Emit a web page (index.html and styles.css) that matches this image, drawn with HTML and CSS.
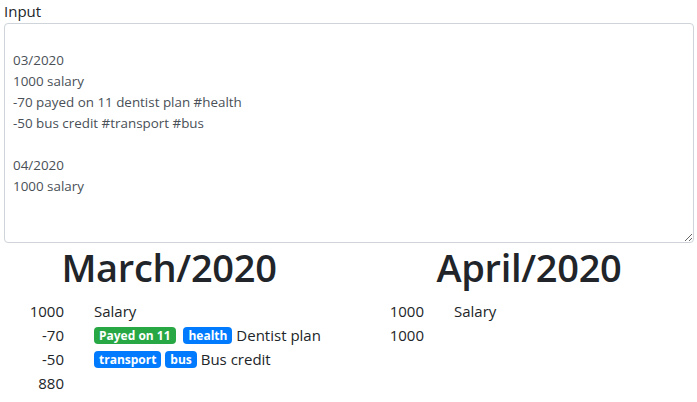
FILE: index.html
```html
<!DOCTYPE html>
<html>
<head>
<meta charset="utf-8">
<link rel="stylesheet" href="styles.css">
</head>
<body>
<div class="app">
  <label class="input-label" for="src">Input</label>
  <textarea id="src" class="input-area" spellcheck="false">

03/2020
1000 salary
-70 payed on 11 dentist plan #health
-50 bus credit #transport #bus

04/2020
1000 salary</textarea>
  <div class="months">
    <section class="month">
      <h1 class="month-title">March/2020</h1>
      <div class="rows">
        <div class="amount">1000</div><div class="desc">Salary</div>
        <div class="amount">-70</div><div class="desc"><span class="badge badge-green">Payed on 11</span> <span class="badge badge-blue">health</span> Dentist plan</div>
        <div class="amount">-50</div><div class="desc"><span class="badge badge-blue">transport</span> <span class="badge badge-blue">bus</span> Bus credit</div>
        <div class="amount">880</div><div class="desc"></div>
      </div>
    </section>
    <section class="month">
      <h1 class="month-title">April/2020</h1>
      <div class="rows">
        <div class="amount">1000</div><div class="desc">Salary</div>
        <div class="amount">1000</div><div class="desc"></div>
      </div>
    </section>
  </div>
</div>
</body>
</html>
```
FILE: styles.css
```css
html, body {
  margin: 0;
  padding: 0;
  background: #fff;
}
body {
  font-family: "Open Sans", "Noto Sans", sans-serif;
  font-size: 15px;
  color: #212529;
  overflow: hidden;
}
.app {
  padding: 0 3px 0 4px;
}
.input-label {
  display: block;
  font-size: 15px;
  line-height: 23px;
  height: 23px;
}
.input-area {
  display: block;
  box-sizing: border-box;
  width: 100%;
  height: 220px;
  margin: 0;
  padding: 5px 8px;
  border: 1px solid #ced4da;
  border-radius: 4px;
  font-family: "Open Sans", "Noto Sans", sans-serif;
  font-size: 13.4px;
  line-height: 21px;
  color: #495057;
  background: #fff;
  outline: none;
}
.months {
  display: grid;
  grid-template-columns: 360px 360px;
  margin: 0 -15px 0 -15px;
}
.month {
  padding: 0 15px;
}
.month-title {
  margin: 0 0 8px 0;
  font-size: 38px;
  font-weight: 600;
  line-height: 48px;
  text-align: center;
  letter-spacing: -0.3px;
}
.rows {
  display: grid;
  grid-template-columns: 60px 1fr;
  column-gap: 30px;
  line-height: 24px;
}
.amount {
  text-align: right;
}
.badge {
  display: inline-block;
  padding: 0 5px;
  font-size: 12px;
  font-weight: 700;
  line-height: 17px;
  color: #fff;
  border-radius: 4px;
  vertical-align: 1px;
}
.badge-green {
  background: #28a745;
  margin-right: 4px;
}
.badge-blue {
  background: #007bff;
}
```
